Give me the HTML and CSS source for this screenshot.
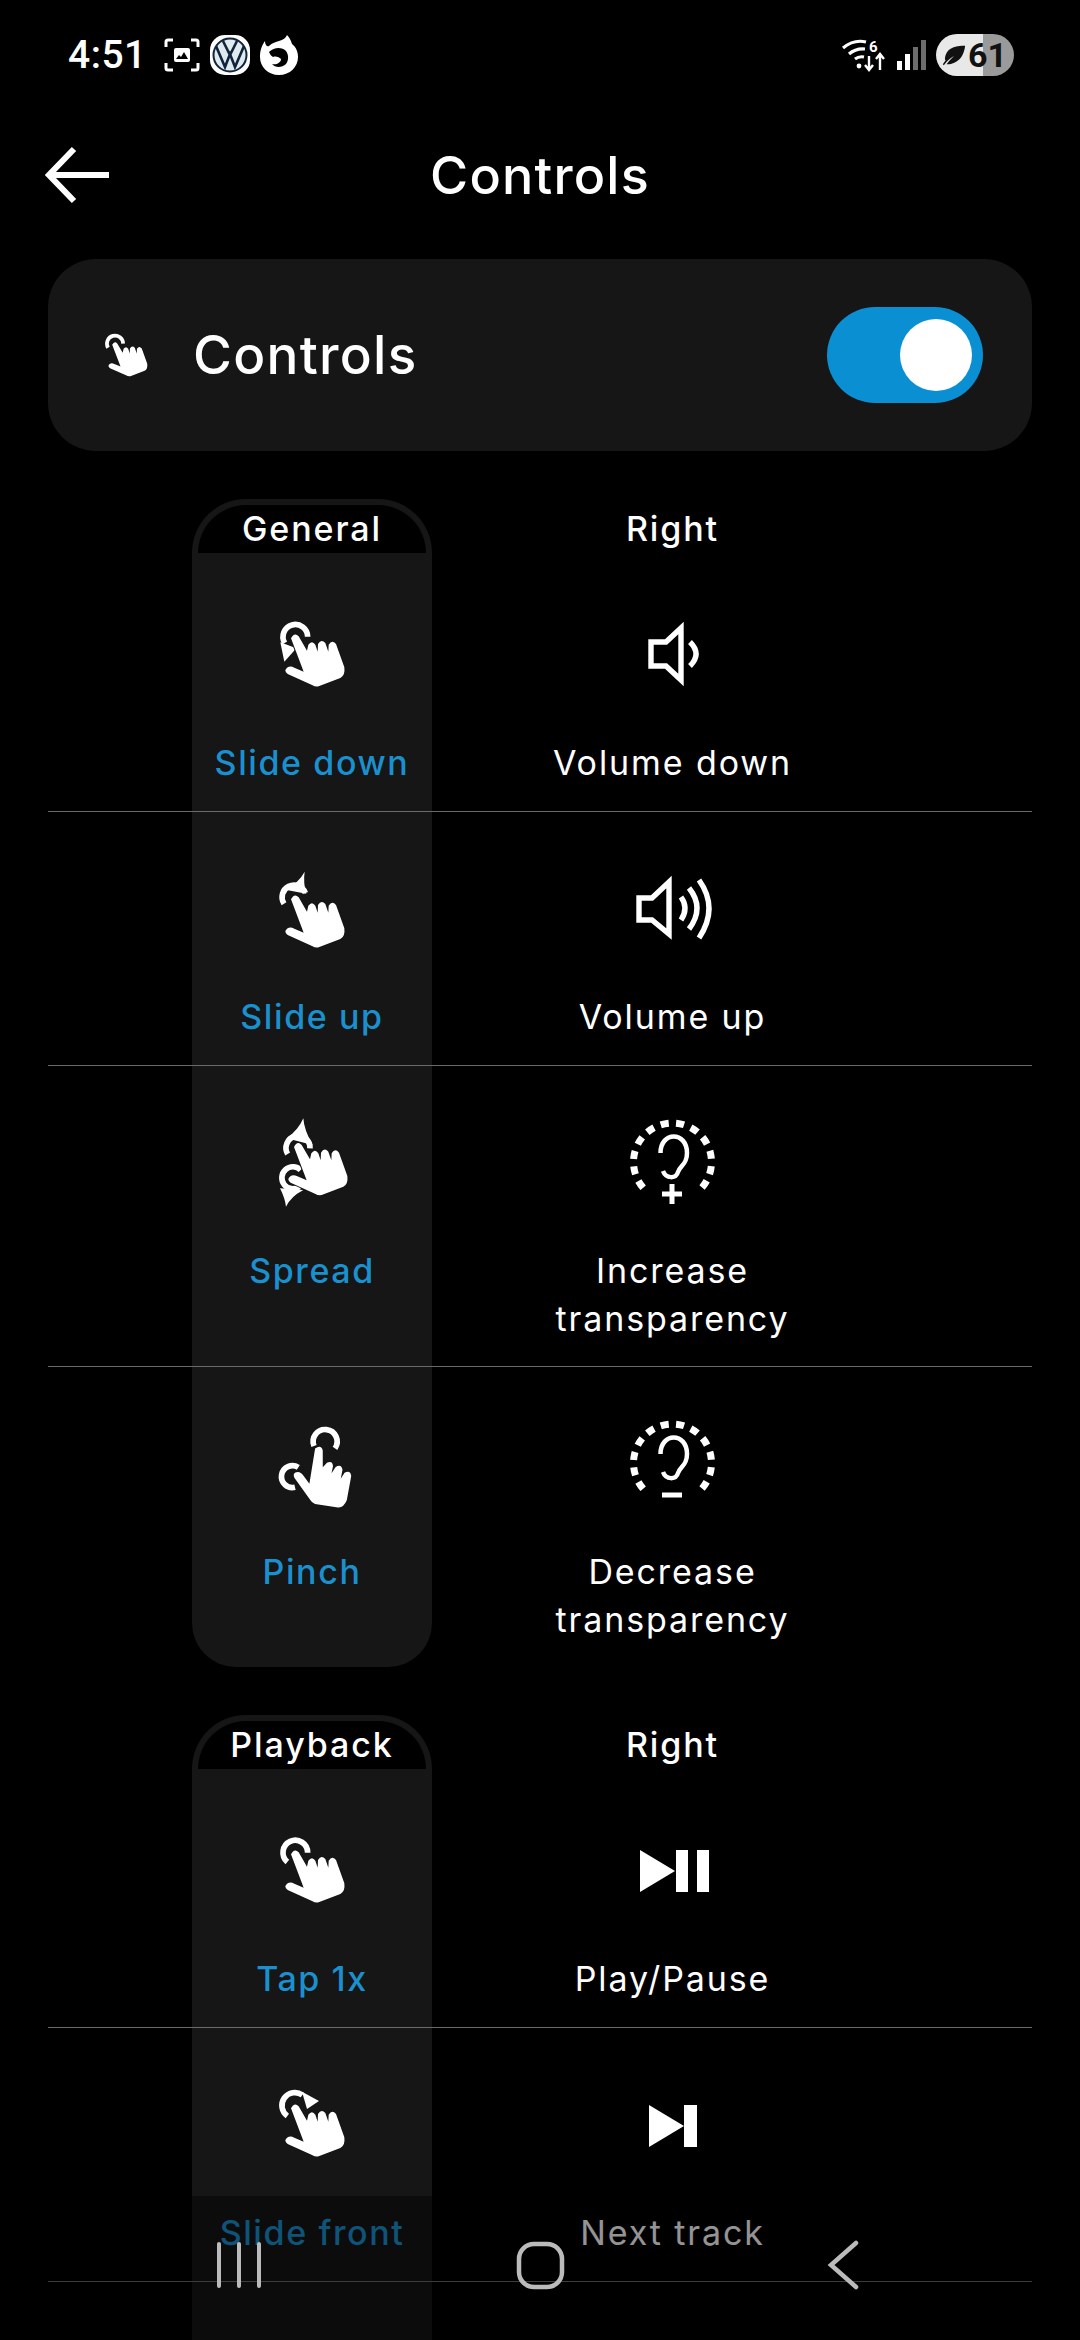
FILE: index.html
```html
<!DOCTYPE html>
<html lang="en">
<head>
<meta charset="utf-8">
<title>Controls</title>
<link rel="stylesheet" href="styles.css">
</head>
<body>
<svg class="defs" width="0" height="0" aria-hidden="true">
  <defs>
    <symbol id="hand" viewBox="310 410 230 230">
      <path class="hand-shape" d="M362 478Q372 458 385 472L410 515 414 497Q425 482 435 497L442 518 443 495Q453 478 465 492L474 518 475 497Q485 480 497 495L522 565Q525 590 510 597L445 622Q435 624 425 618L352 585Q338 575 352 565 360 560 372 566L400 578Z"/>
    </symbol>
    <symbol id="ear" viewBox="0 0 90 90">
      <circle class="ear-dots" cx="46.5" cy="45" r="39" pathLength="360" transform="rotate(139 46.5 45)"/>
      <path class="ear-line" d="M34.5 36C34.5 14 61 14 61 36 61 48 54 48 52 55 50 62 40 62 37 54"/>
    </symbol>
  </defs>
</svg>

<div class="screen">
  <header class="status">
    <div class="status-left">
      <span class="time">4:51</span>
      <svg class="st-ic" width="36" height="36" viewBox="0 0 36 36"><path d="M9 3H4Q2 3 2 5V10M27 3H32Q34 3 34 5V10M9 33H4Q2 33 2 31V26M27 33H32Q34 33 34 31V26" fill="none" stroke="#fff" stroke-width="3"/><rect x="10" y="11" width="16" height="14" rx="2" fill="#fff"/><path d="M12 22l3-4 2 2 3-5 4 7z" fill="#000"/></svg>
      <svg class="st-ic" width="40" height="40" viewBox="0 0 40 40"><rect width="40" height="40" rx="15" fill="#fff"/><circle cx="20" cy="20" r="16.5" fill="#dfeaf0" stroke="#10243a" stroke-width="2"/><path d="M6 11l9 21 5-13 5 13 9-21M13 6l7 14 7-14" fill="none" stroke="#10243a" stroke-width="2.6"/></svg>
      <svg class="st-ic" width="38" height="40" viewBox="0 0 38 40"><path fill="#fff" d="M19 40C8 40 0 32 0 22 0 15 2 10 5 6 5 10 7 12 9 11 12 8 16 7 19 6 23 5 26 3 27 0 30 3 31 6 32 9 36 12 38 17 38 22 38 32 30 40 19 40Z"/><path fill="#000" d="M9 17C14 12 21 12 25 15 29 19 29 25 26 29 22 33 15 33 12 29 16 30 21 28 21 24 19 22 16 21 13 22 11 21 10 19 9 17Z"/></svg>
    </div>
    <div class="status-right">
      <svg class="wifi" width="46" height="34" viewBox="0 0 46 34"><path d="M2 10Q13 1 25 4M8 16Q15 10 24 11M14 21Q18 18 23 19" fill="none" stroke="#fff" stroke-width="3.2"/><circle cx="18" cy="28" r="2.4" fill="#fff"/><path d="M28 18V32M24 27l4 5 4-5M39 32V17M35 21l4-5 4 5" fill="none" stroke="#fff" stroke-width="2.4"/><text class="wifi-six" x="28" y="14">6</text></svg>
      <span class="bars">
        <i class="bar b1"></i><i class="bar b2"></i><i class="bar b3"></i><i class="bar b4"></i>
      </span>
      <span class="battery">
        <svg width="26" height="24" viewBox="0 0 28 24"><path d="M3 23C7 18 9 16 14 13 10 17 8 19 6 22 14 22 24 18 26 2 18 2 8 3 5 12 4 15 4 17 5 18 4 19 3 21 2 22Z" fill="#111"/></svg>
        <span class="batt-num">61</span>
      </span>
    </div>
  </header>

  <div class="appbar">
    <svg class="back" width="66" height="58" viewBox="0 0 66 58"><path d="M64 29H6M29 3L4 29 29 55" fill="none" stroke="#fff" stroke-width="6"/></svg>
    <h1 class="title">Controls</h1>
  </div>

  <section class="card">
    <div class="card-left">
      <svg class="card-hand" width="46" height="46" viewBox="320 420 210 210"><path class="ring" d="M343 492A37 37 0 1 1 412 473"/><use href="#hand" x="310" y="410" width="230" height="230"/></svg>
      <span class="card-label">Controls</span>
    </div>
    <div class="toggle"><span class="knob"></span></div>
  </section>

  <section class="group">
    <div class="row head">
      <div class="left-head">General</div>
      <div class="right-head">Right</div>
    </div>
    <div class="row first">
      <div class="gesture">
        <svg class="ic" width="70" height="70" viewBox="320 420 210 210"><path class="ring" d="M343 492A37 37 0 1 1 412 473"/><path class="solid" d="M342 548L330 490 378 508Z"/><use href="#hand" x="310" y="410" width="230" height="230"/></svg>
        <span class="g-text">Slide down</span>
      </div>
      <div class="action">
        <svg class="ic" width="70" height="70" viewBox="0 0 70 70"><path class="line" d="M15 23H30L45 9V61L30 47H15Z"/><path class="line" d="M54 23Q66 35 54 47"/></svg>
        <span class="a-text">Volume down</span>
      </div>
    </div>
    <div class="row one">
      <div class="gesture">
        <svg class="ic" width="70" height="70" viewBox="320 420 210 210"><path class="ring" d="M341 512A36 36 0 1 1 405 480"/><path class="solid" d="M345 470Q385 450 403 416 398 450 408 482Z"/><use href="#hand" x="310" y="431" width="230" height="230"/></svg>
        <span class="g-text">Slide up</span>
      </div>
      <div class="action">
        <svg class="ic" width="82" height="70" viewBox="0 0 82 70"><path class="line" d="M9 25H22L39 9V61L22 47H9Z"/><path class="line" d="M51 24Q59 35 51 47M59 15Q75 35 59 56M69 7Q89 35 69 65"/></svg>
        <span class="a-text">Volume up</span>
      </div>
    </div>
    <div class="row two">
      <div class="gesture">
        <svg class="ic" width="90" height="90" viewBox="291 171 270 270"><path class="ring" d="M353 282A36 36 0 1 1 420 265"/><path class="solid" d="M350 235Q385 210 400 175 402 210 428 255Z"/><path class="ring" d="M392 330A33 33 0 1 0 388 380"/><path class="solid" d="M330 385Q345 415 348 440 362 410 400 390Z"/><use href="#hand" x="320" y="193" width="230" height="230"/></svg>
        <span class="g-text">Spread</span>
      </div>
      <div class="action">
        <svg class="ic" width="90" height="90" viewBox="0 0 90 90">
          <use href="#ear" x="0" y="0" width="90" height="90"/>
          <path class="ear-line thick" d="M46 67V87M36 77H56"/>
        </svg>
        <span class="a-text">Increase<br>transparency</span>
      </div>
    </div>
    <div class="row two last">
      <div class="gesture">
        <svg class="ic" width="90" height="90" viewBox="291 1074 270 270"><path class="ring" d="M432 1158A36 36 0 1 1 495 1165"/><path class="ring" d="M385 1222A33 33 0 1 0 375 1282"/><g transform="translate(30 715) rotate(30 435 545)"><use href="#hand" x="310" y="410" width="230" height="230"/></g></svg>
        <span class="g-text">Pinch</span>
      </div>
      <div class="action">
        <svg class="ic" width="90" height="90" viewBox="0 0 90 90">
          <use href="#ear" x="0" y="0" width="90" height="90"/>
          <path class="ear-line thick" d="M36 77H56"/>
        </svg>
        <span class="a-text">Decrease<br>transparency</span>
      </div>
    </div>
  </section>

  <section class="group">
    <div class="row head">
      <div class="left-head">Playback</div>
      <div class="right-head">Right</div>
    </div>
    <div class="row first">
      <div class="gesture">
        <svg class="ic" width="70" height="70" viewBox="320 420 210 210"><path class="ring" d="M351 501A37 37 0 1 1 412 473"/><use href="#hand" x="310" y="410" width="230" height="230"/></svg>
        <span class="g-text">Tap 1x</span>
      </div>
      <div class="action">
        <svg class="ic" width="76" height="70" viewBox="0 0 76 70"><path class="solid" d="M7 15L42 36 7 57Z"/><rect class="solid" x="43" y="15" width="12" height="42"/><rect class="solid" x="64" y="15" width="12" height="42"/></svg>
        <span class="a-text">Play/Pause</span>
      </div>
    </div>
    <div class="row one">
      <div class="gesture">
        <svg class="ic" width="70" height="70" viewBox="320 420 210 210"><path class="ring" d="M351 501A37 37 0 0 1 396 438"/><path class="solid" d="M446 456L395 428 410 480Z"/><use href="#hand" x="310" y="410" width="230" height="230"/></svg>
        <span class="g-text">Slide front</span>
      </div>
      <div class="action">
        <svg class="ic" width="70" height="70" viewBox="0 0 70 70"><path class="solid" d="M13 16L48 37 13 58Z"/><rect class="solid" x="48" y="16" width="13" height="42"/></svg>
        <span class="a-text">Next track</span>
      </div>
    </div>
    <div class="row tail"><div class="gesture"></div></div>
  </section>

  <nav class="navbar">
    <svg width="46" height="50" viewBox="0 0 46 50"><path d="M3 4V46M23 4V46M43 4V46" stroke="#bbb" stroke-width="4" stroke-linecap="round"/></svg>
    <svg width="52" height="50" viewBox="0 0 52 50"><rect x="5" y="4" width="43" height="43" rx="15" fill="none" stroke="#bbb" stroke-width="4.5"/></svg>
    <svg width="46" height="50" viewBox="0 0 46 50"><path d="M38 3L13 25 38 47" fill="none" stroke="#bbb" stroke-width="4.5" stroke-linecap="round"/></svg>
  </nav>
</div>
</body>
</html>
```

FILE: styles.css
```css
* { box-sizing: border-box; }
html, body { margin: 0; padding: 0; background: #000; }
body { width: 1080px; height: 2340px; overflow: hidden; font-family: "Inter", "Liberation Sans", sans-serif; color: #fff; }
.defs { position: absolute; }
.screen { position: relative; width: 1080px; height: 2340px; overflow: hidden; padding: 0 48px; background: #000; }

.hand-shape { fill: #fff; stroke: #161616; stroke-width: 6; paint-order: stroke; }
.ring { fill: none; stroke: #fff; stroke-width: 17; }
.solid { fill: #fff; }
.line { fill: none; stroke: #fff; stroke-width: 5.4; }
.ear-dots { fill: none; stroke: #fff; stroke-width: 7; stroke-dasharray: 12 10.7 12 10.7 12 10.7 12 10.7 12 10.7 12 10.7 12 10.7 12 10.7 12 10.7 12 10.7 12 10.7 12 98; }
.ear-line { fill: none; stroke: #fff; stroke-width: 4.5; }
.ear-line.thick { stroke-width: 5; }

.status { display: flex; justify-content: space-between; align-items: center; height: 110px; padding: 0 18px 0 20px; }
.status-left, .status-right { display: flex; align-items: center; }
.status-left { gap: 10px; }
.time { font-family: "Roboto", sans-serif; font-size: 39px; font-weight: 500; margin-right: 7px; letter-spacing: .5px; }
.wifi { overflow: visible; }
.wifi-six { font: 700 15px "Roboto", sans-serif; fill: #fff; }
.status-right { gap: 10px; }
.bars { display: flex; align-items: flex-end; gap: 3px; height: 30px; }
.bar { display: block; width: 5px; background: #6d6d6d; }
.bar.b1 { height: 9px; background: #fff; }
.bar.b2 { height: 16px; background: #fff; }
.bar.b3 { height: 23px; }
.bar.b4 { height: 30px; }
.battery { display: flex; align-items: center; gap: 1px; width: 78px; height: 42px; padding-left: 5px; border-radius: 21px; background: linear-gradient(90deg, #e8e8e8 60%, #9a9a9a 60%); color: #111; }
.batt-num { font: 700 34px "Roboto", sans-serif; line-height: 42px; }

.appbar { position: relative; display: flex; justify-content: center; align-items: center; height: 66px; margin-top: 32px; }
.back { position: absolute; left: -3px; top: 4px; }
.title { margin: 0; font-size: 52px; font-weight: 500; letter-spacing: 1.2px; }

.card { display: flex; align-items: center; justify-content: space-between; height: 192px; margin-top: 51px; padding: 0 49px 0 55px; border-radius: 48px; background: #161616; }
.card-left { display: flex; align-items: center; gap: 44px; }
.card-label { font-size: 53px; font-weight: 500; letter-spacing: 1.3px; }
.toggle { display: flex; align-items: center; justify-content: flex-end; width: 156px; height: 96px; padding-right: 11px; border-radius: 48px; background: #0b8fd3; }
.knob { width: 72px; height: 72px; border-radius: 50%; background: #fff; }

.group { margin-top: 48px; }
.row { display: flex; }
.row.first { height: 259px; border-bottom: 1px solid #6a6a6a; }
.row.one { height: 254px; border-bottom: 1px solid #6a6a6a; }
.row.two { height: 301px; border-bottom: 1px solid #6a6a6a; }
.row.two.last { height: 300px; border-bottom: 0; }
.row.tail { height: 120px; }
.row.head { height: 54px; }

.left-head, .right-head { display: flex; justify-content: center; align-items: center; width: 240px; font-size: 34px; font-weight: 500; letter-spacing: 1.9px; }
.left-head { margin-left: 144px; padding-bottom: 2px; border: 6px solid #161616; border-bottom: 0; border-radius: 56px 56px 0 0; }
.right-head { margin-left: 119px; padding: 5px 0 0 3px; }

.gesture, .action { display: flex; flex-direction: column; align-items: center; width: 240px; text-align: center; }
.gesture { margin-left: 144px; background: #161616; }
.action { margin-left: 119px; }
.row.last .gesture { border-radius: 0 0 44px 44px; }
.ic { display: block; flex: none; margin-top: 61px; overflow: visible; }
.row.first .ic { margin-top: 66px; }
.row.two .ic { margin-top: 51px; }
.g-text, .a-text { display: block; margin-top: 50px; font-size: 34px; line-height: 48px; letter-spacing: 1.6px; font-weight: 500; white-space: nowrap; }
.row.two .g-text, .row.two .a-text { margin-top: 40px; }
.g-text { color: #1b90cf; }
.a-text { padding-left: 3px; font-weight: 400; letter-spacing: 1.9px; }

.navbar { position: absolute; left: 0; right: 0; bottom: 0; display: flex; align-items: center; justify-content: space-between; height: 144px; padding: 0 216px 6px; background: rgba(0,0,0,.42); }
.navbar svg { flex: none; }
```
